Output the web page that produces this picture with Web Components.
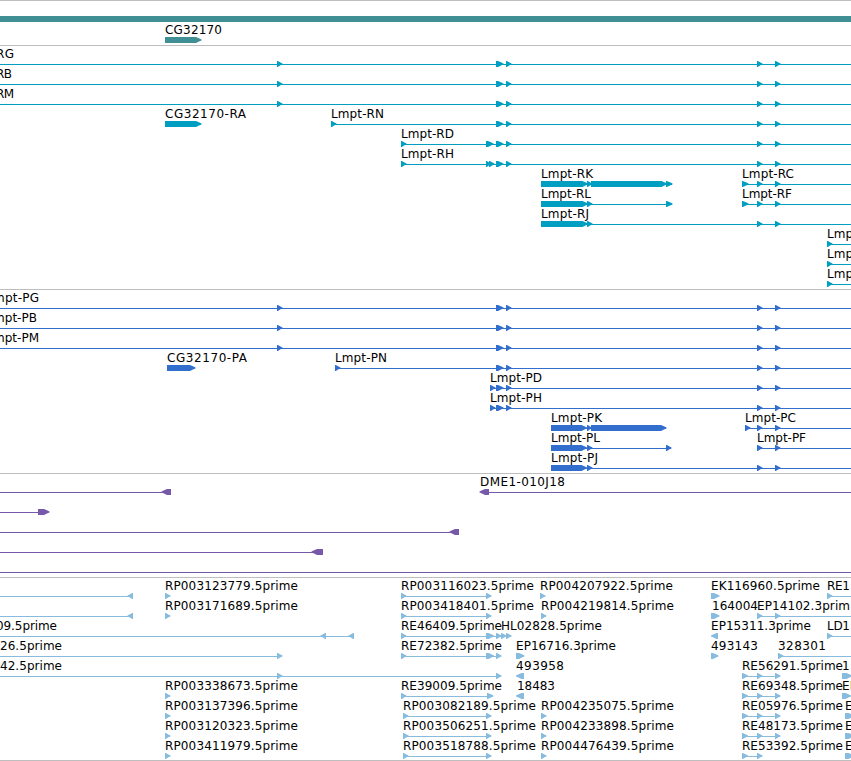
<!DOCTYPE html>
<html lang="en">
<head>
<meta charset="utf-8">
<title>Genome browser</title>
<style>
  body { margin: 0; background: #fff; }
</style>
</head>
<body>
<genome-view></genome-view>

<script>
// exon positions shared by most of the Lmpt isoforms
const MID = '496:503.5 506:511.5';
const END = '757:762.5 775:780.5';

class FeatureRow extends HTMLElement {
  connectedCallback() {
    this.attachShadow({ mode: 'open' });
    this.shadowRoot.innerHTML = `
      <style>
        :host { display: block; height: 20px; }
        svg { display: block; width: 100%; height: 20px; overflow: visible; }
        .shape { fill: var(--track-color); }
        text { font: 12px "DejaVu Sans", sans-serif; fill: #000; }
      </style>
      <svg>${this.lines()}${this.exons()}${this.labels()}</svg>
    `;
  }

  pairs(name) {
    const value = (this.getAttribute(name) || '').trim();
    return value ? value.split(/\s+/).map(p => p.split(':').map(Number)) : [];
  }

  lines() {
    return this.pairs('lines').map(([a, b]) =>
      `<rect class="shape" x="${a}" y="18" width="${b - a}" height="1"/>`).join('');
  }

  // from:to, the tip is at "to", so from > to points left
  exons() {
    return this.pairs('exons').map(([from, to]) => {
      const dir = to > from ? 1 : -1;
      const size = Math.abs(to - from);
      const neck = size > 6.5 ? to - dir * 5.5 : from + dir * 0.8;
      const mid = to - dir * 2;
      return `<polygon class="shape" points="${from},15 ${neck},15 ${mid},16.4 ${to},17.4 ${to},18.4 ${mid},19.3 ${neck},21 ${from},21"/>`;
    }).join('');
  }

  // x:width:text, separated by |
  labels() {
    const value = this.getAttribute('labels');
    if (!value) return '';
    return value.split('|').map(l => {
      const [x, width, text] = l.split(':');
      return `<text x="${x}" y="12" textLength="${width}">${text}</text>`;
    }).join('');
  }
}
customElements.define('feature-row', FeatureRow);

class GenomeTrack extends HTMLElement {
  connectedCallback() {
    this.attachShadow({ mode: 'open' });
    this.shadowRoot.innerHTML = `
      <style>
        :host {
          display: block;
          padding-bottom: 3px;
          border-bottom: 1px solid #bebebe;
        }
      </style>
      <slot></slot>
    `;
  }
}
customElements.define('genome-track', GenomeTrack);

class GeneSpan extends HTMLElement {
  connectedCallback() {
    this.attachShadow({ mode: 'open' });
    this.shadowRoot.innerHTML = `
      <style>
        :host { display: block; padding-top: 15px; }
        div { height: 6px; background: var(--track-color); }
      </style>
      <div></div>
    `;
  }
}
customElements.define('gene-span', GeneSpan);

class GenomeView extends HTMLElement {
  connectedCallback() {
    const full = (p, names) => names.map(([x, w, n]) => `
      <feature-row lines="0:851" exons="277:282.5 ${MID} ${END}" labels="${x}:${w}:${p}${n}"></feature-row>`).join('');

    this.attachShadow({ mode: 'open' });
    this.shadowRoot.innerHTML = `
      <style>
        :host {
          display: block;
          width: 851px;
          height: 761px;
          box-sizing: border-box;
          overflow: hidden;
          border-top: 1px solid #bebebe;
          background: #fff;
        }
        .genes { --track-color: #3f8f94; }
        .transcripts { --track-color: #009fc1; }
        .proteins { --track-color: #326ecd; }
        .bacs { --track-color: #7759a9; }
        .ests { --track-color: #88bcdf; padding-bottom: 2px; }
      </style>

      <genome-track class="genes">
        <gene-span></gene-span>
        <feature-row exons="165:201.5" labels="165:57:CG32170"></feature-row>
      </genome-track>

      <genome-track class="transcripts">
        ${full('R', [[-4, 18, 'G'], [-4, 16, 'B'], [-4, 18, 'M']])}
        <feature-row lines="331:851" exons="165:201.5 331:336.5 ${MID} ${END}" labels="165:81:CG32170-RA|331:53:Lmpt-RN"></feature-row>
        <feature-row lines="401:851" exons="401:406.5 486:493.5 ${MID} ${END}" labels="401:53:Lmpt-RD"></feature-row>
        <feature-row lines="401:851" exons="401:406.5 486:491 489:494.5 ${MID} ${END}" labels="401:53:Lmpt-RH"></feature-row>
        <feature-row lines="541:672 742:851" exons="541:588 587:592.5 591:667 666:672.5 742:748.5 ${END}" labels="541:52:Lmpt-RK|742:52:Lmpt-RC"></feature-row>
        <feature-row lines="541:672 742:851" exons="541:588 587:592.5 666:672.5 742:748.5 ${END}" labels="541:50:Lmpt-RL|742:50:Lmpt-RF"></feature-row>
        <feature-row lines="541:851" exons="541:588 587:592.5 ${END}" labels="541:48:Lmpt-RJ"></feature-row>
        <feature-row lines="827:851" exons="827:832.5" labels="827:26:Lmp"></feature-row>
        <feature-row lines="827:851" exons="827:832.5" labels="827:26:Lmp"></feature-row>
        <feature-row lines="827:851" exons="827:832.5" labels="827:26:Lmp"></feature-row>
      </genome-track>

      <genome-track class="proteins">
        ${full('mpt-P', [[-7, 46, 'G'], [-7, 44, 'B'], [-7, 46, 'M']])}
        <feature-row lines="335:851" exons="167:195.5 335:340.5 ${MID} ${END}" labels="167:80:CG32170-PA|335:52:Lmpt-PN"></feature-row>
        <feature-row lines="490:851" exons="490:495.5 ${MID} ${END}" labels="490:52:Lmpt-PD"></feature-row>
        <feature-row lines="490:851" exons="490:495.5 ${MID} ${END}" labels="490:52:Lmpt-PH"></feature-row>
        <feature-row lines="551:666 745:851" exons="551:587 587:592 591:666.5 745:750.5 ${END}" labels="551:51:Lmpt-PK|745:51:Lmpt-PC"></feature-row>
        <feature-row lines="551:671 757:851" exons="551:587 587:592.5 666:671.5 ${END}" labels="551:49:Lmpt-PL|757:49:Lmpt-PF"></feature-row>
        <feature-row lines="551:851" exons="551:587 587:592.5 ${END}" labels="551:47:Lmpt-PJ"></feature-row>
      </genome-track>

      <genome-track class="bacs">
        <feature-row lines="0:170 481:851" exons="171:161.5 489:479.5" labels="480:85:DME1-010J18"></feature-row>
        <feature-row lines="0:48" exons="38:49.5"></feature-row>
        <feature-row lines="0:458" exons="459:449.5"></feature-row>
        <feature-row lines="0:322" exons="323:311.5"></feature-row>
        <feature-row lines="0:851"></feature-row>
      </genome-track>

      <genome-track class="ests">
        <feature-row lines="0:132 401:491 827:851" exons="133:127.5 165:170.5 401:406.5 486:491.5 540:545.5 711:719.5 827:832.5"
          labels="165:133:RP003123779.5prime|401:133:RP003116023.5prime|540:133:RP004207922.5prime|711:109:EK116960.5prime|827:23:RE1"></feature-row>
        <feature-row lines="0:132 401:491 757:851" exons="133:127.5 165:170.5 401:406.5 486:491.5 541:546.5 711:719.5 ${END}"
          labels="165:133:RP003171689.5prime|401:133:RP003418401.5prime|541:133:RP004219814.5prime|712:46:164004|757:93:EP14102.3prim"></feature-row>
        <feature-row lines="0:353 401:511 827:851" exons="326:320.5 354:348.5 401:406.5 486:494 496:501.5 501:506.5 506:511.5 718:711 827:832.5"
          labels="-4:61:09.5prime|401:101:RE46409.5prime|501:101:HL02828.5prime|711:100:EP15311.3prime|827:23:LD1"></feature-row>
        <feature-row lines="0:281 401:500 778:851" exons="277:282.5 401:406.5 486:494 496:501.5 516:524.5 711:718.5 778:783.5"
          labels="0:62:26.5prime|401:101:RE72382.5prime|516:100:EP16716.3prime|711:47:493143|778:48:328301"></feature-row>
        <feature-row lines="0:500 742:780" exons="277:282.5 496:501.5 524:516 742:748 ${END} 842:852"
          labels="0:62:42.5prime|516:48:493958|742:101:RE56291.5prime|842:8:1"></feature-row>
        <feature-row lines="401:492 742:780" exons="165:170.5 401:406.5 487:493.5 524:516 742:748 ${END} 842:851"
          labels="165:133:RP003338673.5prime|401:101:RE39009.5prime|517:38:18483|742:101:RE69348.5prime|842:15:EP"></feature-row>
        <feature-row lines="403:491 742:780" exons="165:170.5 403:408.5 486:491.5 541:546.5 742:748 ${END} 845:854"
          labels="165:133:RP003137396.5prime|403:133:RP003082189.5prime|541:133:RP004235075.5prime|742:101:RE05976.5prime|845:7:E"></feature-row>
        <feature-row lines="403:491 742:780" exons="165:170.5 403:408.5 486:491.5 541:546.5 742:748 ${END} 845:854"
          labels="165:133:RP003120323.5prime|403:133:RP003506251.5prime|541:133:RP004233898.5prime|742:101:RE48173.5prime|845:7:E"></feature-row>
        <feature-row lines="403:491 742:762" exons="165:170.5 403:408.5 486:491.5 541:546.5 742:748 757:762.5 845:854"
          labels="165:133:RP003411979.5prime|403:133:RP003518788.5prime|541:133:RP004476439.5prime|742:101:RE53392.5prime|845:7:E"></feature-row>
      </genome-track>
    `;
  }
}
customElements.define('genome-view', GenomeView);
</script>
</body>
</html>
